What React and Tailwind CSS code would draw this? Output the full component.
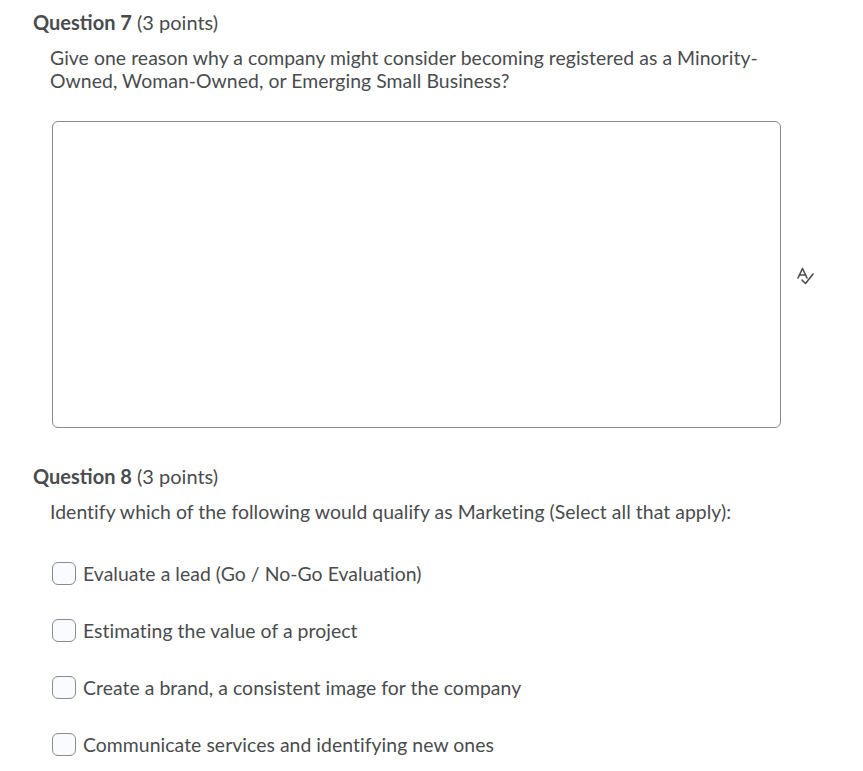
export default function App() {
  const options = [
    "Evaluate a lead (Go / No-Go Evaluation)",
    "Estimating the value of a project",
    "Create a brand, a consistent image for the company",
    "Communicate services and identifying new ones",
  ];

  return (
    <div className="min-h-[771px] bg-white text-[#494c4e] font-['Lato',_'Noto_Sans',_sans-serif]">
      {/* Question 7 */}
      <div className="pl-[33px] pt-[10px]">
        <h2 className="text-[20px] leading-[24px]">
          <span className="font-bold">Question 7</span> (3 points)
        </h2>
        <p className="mt-[12px] ml-[17px] text-[19.4px] tracking-[0.05px] leading-[23px] w-[715px]">
          Give one reason why a company might consider becoming registered as a Minority-Owned, Woman-Owned, or Emerging Small Business?
        </p>
        <div className="mt-[29px] ml-[19px] flex items-center">
          <div className="w-[729px] h-[307px] border border-[#868c8f] rounded-[6px] bg-white" />
          <svg className="ml-[15px] mt-[3px]" width="22" height="18" viewBox="0 0 22 18" fill="none" stroke="#494c4e" strokeWidth="1.6" strokeLinecap="round" strokeLinejoin="round">
            <path d="M2 11 L6.5 1.5 L11 11" />
            <path d="M3.5 8 H9.5" />
            <path d="M6 13 L9.5 16.5 L17 7" />
          </svg>
        </div>
      </div>

      {/* Question 8 */}
      <div className="pl-[33px] pt-[36px]">
        <h2 className="text-[20px] leading-[24px]">
          <span className="font-bold">Question 8</span> (3 points)
        </h2>
        <p className="mt-[12px] ml-[17px] text-[19.4px] tracking-[0.05px] leading-[23px]">
          Identify which of the following would qualify as Marketing (Select all that apply):
        </p>
        <div className="mt-[39px] ml-[19px] flex flex-col gap-[34px]">
          {options.map((o) => (
            <label key={o} className="flex items-center gap-[7px] h-[23px]">
              <span className="w-[24px] h-[23px] border border-[#868c8f] rounded-[6px] bg-[#f9fbff] shrink-0" />
              <span className="text-[19.4px] tracking-[0.05px] leading-[23px]">{o}</span>
            </label>
          ))}
        </div>
      </div>
    </div>
  );
}
